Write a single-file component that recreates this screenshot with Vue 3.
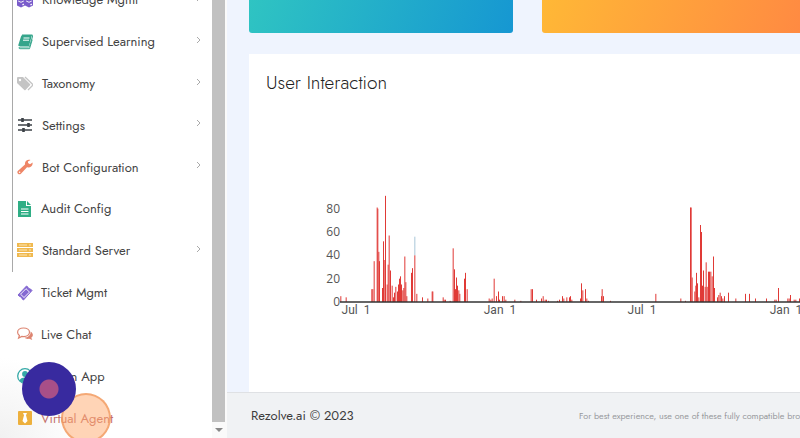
<script setup>
const modules = [
  { label: 'Knowledge Mgmt', icon: 'cubes', expands: true, nested: true },
  { label: 'Supervised Learning', icon: 'book', expands: true, nested: true },
  { label: 'Taxonomy', icon: 'tags', expands: true, nested: true },
  { label: 'Settings', icon: 'sliders', expands: true, nested: true },
  { label: 'Bot Configuration', icon: 'wrench', expands: true, nested: true },
  { label: 'Audit Config', icon: 'file', nested: true },
  { label: 'Standard Server', icon: 'server', expands: true, nested: true },
  { label: 'Ticket Mgmt', icon: 'ticket' },
  { label: 'Live Chat', icon: 'chat' },
  { label: 'Admin App', icon: 'user' },
  { label: 'Virtual Agent', icon: 'agent', active: true },
]

// Each series is [first day, [[day offset, interactions], ...]]
const series = [
  [0, [[2, 5], [18, 4], [95, 11], [98, 11], [102, 35], [111, 81], [113, 80], [116, 43], [118, 35], [127, 12], [130, 52], [134, 36], [136, 91], [141, 15], [144, 32], [147, 57], [151, 27], [156, 14], [160, 4], [163, 8], [167, 13], [172, 9], [175, 15], [178, 20], [181, 22], [184, 15], [188, 10], [191, 12], [194, 39], [197, 17], [200, 5], [214, 25], [217, 29], [224, 40], [230, 7], [247, 4], [263, 3], [276, 9], [278, 9], [309, 4], [312, 2], [316, 2], [330, 1], [339, 46], [343, 28], [346, 11], [349, 21], [352, 14], [356, 10], [359, 7], [373, 20], [376, 25], [381, 11]]],
  [390, [[57, 3], [62, 2], [66, 3], [72, 20], [79, 5], [85, 9], [88, 2], [97, 5], [102, 5], [107, 2], [134, 2], [152, 1], [183, 11], [187, 11], [199, 2], [214, 3], [219, 5], [225, 2], [229, 2], [235, 1], [262, 1], [268, 2], [277, 5], [281, 3], [290, 4], [298, 4], [301, 5], [305, 2], [331, 3], [334, 16], [338, 10], [346, 11], [350, 3], [355, 1], [394, 5], [396, 11], [400, 5], [421, 1]]],
  [870, [[77, 7], [152, 3], [166, 1], [181, 81], [183, 81], [186, 21], [194, 9], [197, 14], [199, 25], [202, 16], [206, 4], [211, 66], [214, 60], [217, 14], [220, 27], [225, 13], [228, 34], [231, 13], [235, 26], [238, 26], [242, 26], [246, 22], [250, 39], [253, 12], [262, 4], [266, 6], [270, 8], [274, 5], [278, 3], [283, 5], [295, 8], [317, 3], [346, 7], [358, 7], [376, 3], [409, 3], [434, 2], [438, 2], [445, 12], [473, 3], [477, 3], [481, 6], [492, 2], [497, 2], [508, 3]]],
]

const plotLeft = 74
const baseline = 112
const toX = (day) => plotLeft + day / 3
const toHeight = (value) => (value * 7) / 6

const bars = series.flatMap(([start, points]) =>
  points.map(([day, value]) => ({ x: toX(start + day - 1), h: toHeight(value) })),
)
const yTicks = [0, 20, 40, 60, 80]
const xTicks = [
  { label: 'Jul  1', x: 90 },
  { label: 'Jan  1', x: 234 },
  { label: 'Jul  1', x: 376 },
  { label: 'Jan  1', x: 520 },
]
</script>

<template>
  <div class="layout">
    <aside class="sidebar">
      <nav class="menu">
        <a
          v-for="item in modules"
          :key="item.label"
          href="#"
          class="row"
          :class="{ nested: item.nested, expands: item.expands, active: item.active }"
        >
          <svg class="icon" viewBox="0 0 16 16" aria-hidden="true">
            <g v-if="item.icon === 'cubes'" fill="#7a5ccb">
              <path d="M8 0l4 2v4l-4 2-4-2V2z" />
              <path d="M4 6l4 2v5.500l-4 2-4-2V8z M12 6l4 2v5.500l-4 2-4-2V8z" />
              <path d="M1.200 9l2.800 1.300L6.800 9M9.200 9l2.800 1.300L14.800 9" fill="none" stroke="#fff" stroke-width=".9" />
              <path d="M5.500 12.800l1.300-.7M13.500 12.800l1.300-.7" fill="none" stroke="#fff" stroke-width="1.500" />
            </g>
            <g v-else-if="item.icon === 'book'">
              <path d="M5 1h10q1 0 .7 1l-3 10q-.3 1-1.300 1H3q-1 0-1 1 0 .7 1 .7h9.500l2.700-9" fill="none" stroke="#35a58b" />
              <path d="M5.500 1H15L12 12H2q-1 0-.7-1L4 2.500Q4.400 1 5.500 1z" fill="#35a58b" />
              <path d="M6.500 4h6M6 6.200h6" stroke="#fff" />
            </g>
            <g v-else-if="item.icon === 'tags'" fill="#c4c4c4">
              <path d="M0 2q0-1 1-1h5l7 7q.6.7 0 1.300L8.500 14q-.6.5-1.200 0L0 7z" />
              <path d="M8 1l7.500 7.200q.6.7 0 1.300L11 14" fill="none" stroke="#c4c4c4" stroke-width="1.300" />
              <circle cx="3" cy="4" r="1.200" fill="#fff" />
            </g>
            <g v-else-if="item.icon === 'sliders'" stroke="#3c4247" stroke-width="1.300">
              <path d="M1 3h14M1 8h14M1 13h14" />
              <path d="M5.500 1v4M11.500 6v4M6.500 11v4" stroke-width="2.600" />
            </g>
            <g v-else-if="item.icon === 'wrench'">
              <path d="M15.600 3.500l-2.600 1.800-2-1.200V2.500L13.500 1C11 0 7.500 1.600 8 5.500L.8 12q-1 1.300.2 2.700 1.400 1.200 2.700.2L10 8.300c3.500.7 6-1.800 5.600-4.800z" fill="#ee8667" />
              <circle cx="2.600" cy="13.200" r=".8" fill="#fff" />
            </g>
            <g v-else-if="item.icon === 'file'">
              <path d="M1 0h8v5h5v11H1z M10 0l4 4h-4z" fill="#2fae85" />
              <path d="M4 8h7.500M4 10.500h7.500M4 13h7.500" stroke="#fff" />
            </g>
            <g v-else-if="item.icon === 'server'">
              <path d="M0 0h16v4H0zM0 5h16v4H0zM0 10h16v4H0z" fill="#f0b94f" />
              <path d="M2 2h8M2 7h8M2 12h8M12 2h2M12 7h2M12 12h2" stroke="#fff3d5" stroke-width=".8" />
            </g>
            <g v-else-if="item.icon === 'ticket'">
              <path d="M9.500 1l1.500 1.200q0 1.800 2.500 1.800l1.500 1.500L6.500 15 5 13.700q0-2-2.400-2.200L1 10z" fill="#8468d2" stroke="#8468d2" />
              <path d="M9 3.700l3.500 3.400L7 12.500 3.500 9.200z" fill="none" stroke="#fff" stroke-width=".9" />
            </g>
            <g v-else-if="item.icon === 'chat'">
              <path d="M6.500 2c3.500 0 6 1.900 6 4.300s-2.500 4.300-6 4.300l-1.700-.2L1.600 12l.8-2.600C1.200 8.500.6 7.500.6 6.300.6 3.900 3 2 6.500 2z" fill="none" stroke="#dd8571" stroke-width="1.200" />
              <path d="M13.500 5.500c3 2 3 4.500.8 6.200l1 2.300-3-1.200c-2 .4-4-.1-5-1.200 4 0 6.700-2.500 6.200-6.100z" fill="#dd8571" />
            </g>
            <g v-else-if="item.icon === 'user'">
              <circle cx="8" cy="8" r="7.300" fill="#fff" stroke="#35a9a7" stroke-width="1.300" />
              <circle cx="8" cy="6" r="2.900" fill="#35a9a7" />
              <path d="M2.500 12.500q1-3 5.500-3t5.500 3Q11.500 15 8 15t-5.500-2.500z" fill="#35a9a7" />
            </g>
            <g v-else>
              <rect x="1" y="1" width="14" height="14" rx="1" fill="#edb03d" />
              <path d="M6 3h4l-1 2.200L10.500 11 8 13.500 5.500 11 7 5.200z" fill="#fff" />
            </g>
          </svg>
          <span class="label">{{ item.label }}</span>
          <svg v-if="item.expands" class="chevron" viewBox="0 0 6 8" aria-hidden="true">
            <path d="M1 1l3 3-3 3" />
          </svg>
        </a>
      </nav>
      <span class="marker peach"></span>
      <span class="marker indigo"></span>
    </aside>

    <div class="scrollbar" aria-hidden="true">
      <div class="thumb"></div>
      <svg class="down" viewBox="0 0 8 4"><path d="M0 0h8L4 4z" /></svg>
    </div>

    <div class="workspace">
      <main class="content">
        <div class="cards">
          <div class="card teal"></div>
          <div class="card orange"></div>
        </div>
        <section class="panel">
          <h2>User Interaction</h2>
          <svg class="chart" role="img" aria-label="User Interaction">
            <rect :x="toX(223)" :y="baseline - toHeight(56)" width="1" :height="toHeight(16)" fill="#a9c6d8" />
            <g fill="#e03a36">
              <rect v-for="(bar, i) in bars" :key="i" :x="bar.x" :y="baseline - bar.h" width="1" :height="bar.h" />
            </g>
            <line :x1="plotLeft" x2="100%" :y1="baseline" :y2="baseline" stroke="#333" stroke-width="1.500" />
            <text v-for="tick in yTicks" :key="tick" :x="plotLeft" :y="baseline - toHeight(tick) + 4" text-anchor="end">{{ tick }}</text>
            <text v-for="tick in xTicks" :key="tick.x" class="date" :x="tick.x" :y="baseline + 12" text-anchor="middle">{{ tick.label }}</text>
          </svg>
        </section>
      </main>
      <footer class="footer">
        <span class="copyright">Rezolve.ai © 2023</span>
        <span class="notice">For best experience, use one of these fully compatible browsers</span>
      </footer>
    </div>
  </div>
</template>

<style>
body {
  margin: 0;
  overflow: hidden;
}
</style>

<style scoped>
.layout {
  display: flex;
  height: 100vh;
  overflow: hidden;
  background: #fff;
  font-family: Jost, Lato, sans-serif;
  color: #3c3c3c;
}
.sidebar {
  position: relative;
  flex: 0 0 212px;
  overflow: hidden;
  background: radial-gradient(circle at 0 100%, #f1f1f1, #fff 80px);
}
.menu {
  display: grid;
  grid-auto-rows: 1fr;
  height: calc(100% + 22px);
  margin-top: -21px;
}
.row {
  display: flex;
  align-items: center;
  gap: 8px;
  padding: 0 10px 0 17px;
  color: #444;
  font-size: 13px;
  text-decoration: none;
}
.nested {
  margin-left: 12px;
  padding-left: 4px;
  border-left: 1px solid #a9a9a9;
}
.expands {
  gap: 9px;
}
.active {
  color: #c4706c;
}
.icon {
  flex: none;
  width: 16px;
  height: 16px;
}
.label {
  flex: 1;
}
.chevron {
  width: 6px;
  height: 8px;
  margin-bottom: 4px;
  fill: none;
  stroke: #aaa;
}
.marker {
  position: absolute;
  box-sizing: border-box;
  border-radius: 50%;
}
.peach {
  left: 61px;
  bottom: -5px;
  width: 50px;
  height: 50px;
  border: 2px solid rgba(240, 150, 90, 0.7);
  background: rgba(255, 170, 110, 0.5);
}
.indigo {
  left: 22px;
  bottom: 22px;
  width: 54px;
  height: 54px;
  background: radial-gradient(circle, #a84f88 9px, #382a9f 10px);
}
.scrollbar {
  display: flex;
  flex: 0 0 13px;
  flex-direction: column;
  align-items: center;
  padding-right: 2px;
  background: #fafafa;
}
.thumb {
  flex: 1;
  width: 100%;
  background: #c1c1c1;
}
.down {
  width: 8px;
  height: 4px;
  margin: 6px 0;
  fill: #888;
}
.workspace {
  display: flex;
  flex: 1;
  flex-direction: column;
  min-width: 0;
  overflow: hidden;
}
.content {
  display: flex;
  flex: 1;
  flex-direction: column;
  gap: 21px;
  padding-left: 22px;
  background: #eff4fe;
}
.cards {
  display: grid;
  grid-template-columns: 264px 1fr;
  gap: 29px;
}
.card {
  height: 33px;
  border-radius: 0 0 3px 3px;
}
.teal {
  background: linear-gradient(110deg, #2fc4c2, #1697d2);
}
.orange {
  border-bottom-right-radius: 0;
  background: linear-gradient(110deg, #ffb836, #ff8a42);
}
.panel {
  flex: 1;
  padding: 17px 0 0 17px;
  background: #fff;
}
h2 {
  margin: 0;
  font-size: 19px;
  font-weight: 300;
  line-height: 24px;
  color: #222;
}
.chart {
  display: block;
  width: 100%;
  height: 136px;
  margin-top: 95px;
}
.chart text {
  fill: #555;
  font-family: "Open Sans", sans-serif;
  font-size: 12px;
  white-space: pre;
}
.chart .date {
  font-family: Roboto, sans-serif;
}
.footer {
  display: flex;
  align-items: center;
  justify-content: space-between;
  height: 45px;
  padding-left: 24px;
  border-top: 1px solid #dfe1e4;
  background: #f0f2f4;
  white-space: nowrap;
}
.copyright {
  flex: 0 0 328px;
  font-size: 13px;
}
.notice {
  flex: 1 0 auto;
  color: #97999c;
  font-size: 9px;
}
</style>
